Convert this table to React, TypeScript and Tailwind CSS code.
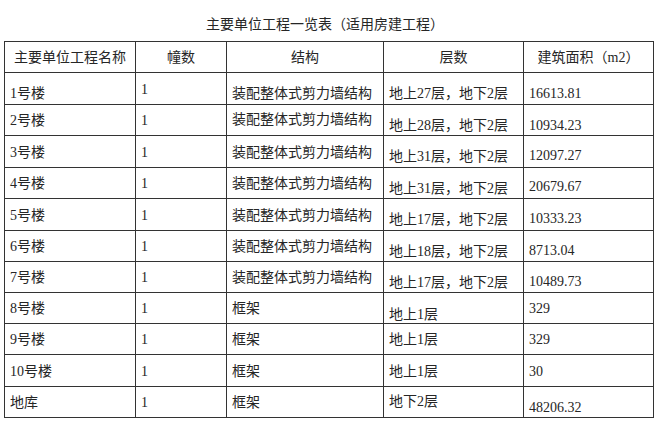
import React from "react";

type Row = { cells: string[]; low: number[]; h: string };

const rows: Row[] = [
  { cells: ["1号楼", "1", "装配整体式剪力墙结构", "地上27层，地下2层", "16613.81"], low: [10, 3, 10, 10, 10], h: "h-[32px]" },
  { cells: ["2号楼", "1", "装配整体式剪力墙结构", "地上28层，地下2层", "10934.23"], low: [1, 1, 0, 11, 11], h: "h-[31px]" },
  { cells: ["3号楼", "1", "装配整体式剪力墙结构", "地上31层，地下2层", "12097.27"], low: [2, 2, 2, 11, 8], h: "h-[32px]" },
  { cells: ["4号楼", "1", "装配整体式剪力墙结构", "地上31层，地下2层", "20679.67"], low: [2, 2, 2, 11, 8], h: "h-[31px]" },
  { cells: ["5号楼", "1", "装配整体式剪力墙结构", "地上17层，地下2层", "10333.23"], low: [2, 2, 2, 11, 8], h: "h-[32px]" },
  { cells: ["6号楼", "1", "装配整体式剪力墙结构", "地上18层，地下2层", "8713.04"], low: [2, 2, 2, 11, 9], h: "h-[31px]" },
  { cells: ["7号楼", "1", "装配整体式剪力墙结构", "地上17层，地下2层", "10489.73"], low: [2, 2, 2, 11, 10], h: "h-[31px]" },
  { cells: ["8号楼", "1", "框架", "地上1层", "329"], low: [1, 1, 1, 13, 1], h: "h-[31px]" },
  { cells: ["9号楼", "1", "框架", "地上1层", "329"], low: [2, 2, 2, 2, 2], h: "h-[31px]" },
  { cells: ["10号楼", "1", "框架", "地上1层", "30"], low: [2, 2, 2, 2, 2], h: "h-[32px]" },
  { cells: ["地库", "1", "框架", "地下2层", "48206.32"], low: [1, 1, 1, 0, 11], h: "h-[31px]" },
];

const padMap: Record<number, string> = {
  0: "pt-0",
  1: "pt-[1px]",
  2: "pt-[2px]",
  3: "pt-[3px]",
  8: "pt-[8px]",
  9: "pt-[9px]",
  10: "pt-[10px]",
  11: "pt-[11px]",
  13: "pt-[13px]",
};

const headers = ["主要单位工程名称", "幢数", "结构", "层数", "建筑面积（m2）"];

export default function App() {
  return (
    <div
      className="w-[660px] h-[430px] bg-white text-[#262626] overflow-hidden"
      style={{ fontFamily: '"Liberation Serif", "Noto Sans CJK SC", serif' }}
    >
      <div className="h-[41px] w-[650px] ml-[4px] pr-[8px] pt-[9px] flex items-center justify-center text-[14px] leading-none">
        主要单位工程一览表（适用房建工程）
      </div>
      <div className="ml-[4px] w-[650px] border-t border-l border-[#333] grid grid-cols-[131px_91px_157px_140px_130px] text-[14px] leading-none">
        {headers.map((h, i) => (
          <div
            key={i}
            className="h-[31px] flex items-center justify-center border-r border-b border-[#333] pt-[2px]"
          >
            {h}
          </div>
        ))}
        {rows.map((r, ri) =>
          r.cells.map((c, ci) => (
            <div
              key={ri + "-" + ci}
              className={`${r.h} flex items-center border-r border-b border-[#333] pl-[5px] ${padMap[r.low[ci]]}`}
            >
              {c}
            </div>
          ))
        )}
      </div>
    </div>
  );
}
